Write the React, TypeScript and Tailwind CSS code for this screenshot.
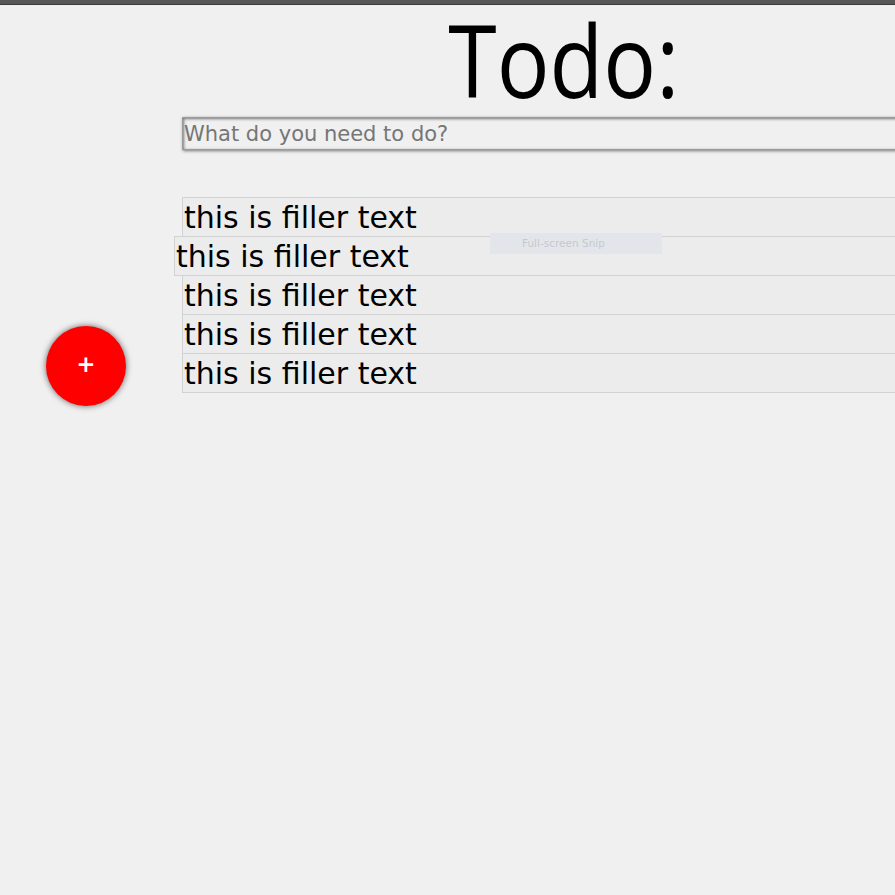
import React from "react";

export default function App() {
  const items = [0, 1, 2, 3, 4];
  return (
    <div className="relative min-h-[895px] w-[895px] overflow-hidden bg-[#f0f0f0]" style={{ fontFamily: '"DejaVu Sans", sans-serif' }}>
      <div className="h-[5px] bg-[#575757] border-b border-[#3a3a3a]" />
      <div className="flex flex-col pl-[182px]">
        <h1 className="mb-[4px] text-center text-[101px] leading-[108px] text-black" style={{ fontFamily: '"Open Sans", sans-serif' }}>
          <span className="inline-block translate-x-[25px] scale-x-[0.87]">Todo:</span>
        </h1>
        <input
          placeholder="What do you need to do?"
          className="h-[33px] w-[760px] border border-[#9a9a9a] bg-[#f0f0f0] px-[1px] text-[21px] text-black placeholder:text-[#767676] shadow-[inset_1px_1px_3px_rgba(0,0,0,0.5),1px_1px_3px_rgba(0,0,0,0.5)] outline-none"
          style={{ fontFamily: '"DejaVu Sans", sans-serif' }}
        />
        <ul className="mt-[47px] flex w-[760px] flex-col">
          {items.map((i) => (
            <li
              key={i}
              className={`h-[40px] border border-[#d2d2d2] bg-[#ececec] pl-[1px] text-[30px] leading-[40px] text-black ${i === 1 ? "ml-[-8px]" : ""} ${i > 0 ? "mt-[-1px]" : ""}`}
            >
              this is filler text
            </li>
          ))}
        </ul>
      </div>
      <div className="absolute left-[490px] top-[233px] flex h-[21px] w-[172px] items-center bg-[#e2e6eb] pl-[32px] text-[10.5px] text-[#c6c8cb]">
        Full-screen Snip
      </div>
      <button className="absolute left-[46px] top-[326px] flex h-[80px] w-[80px] items-center justify-center rounded-full bg-[#ff0000] pb-[3px] text-[23px] font-bold text-white shadow-[0_0_6px_rgba(0,0,0,0.6)]">
        +
      </button>
    </div>
  );
}
